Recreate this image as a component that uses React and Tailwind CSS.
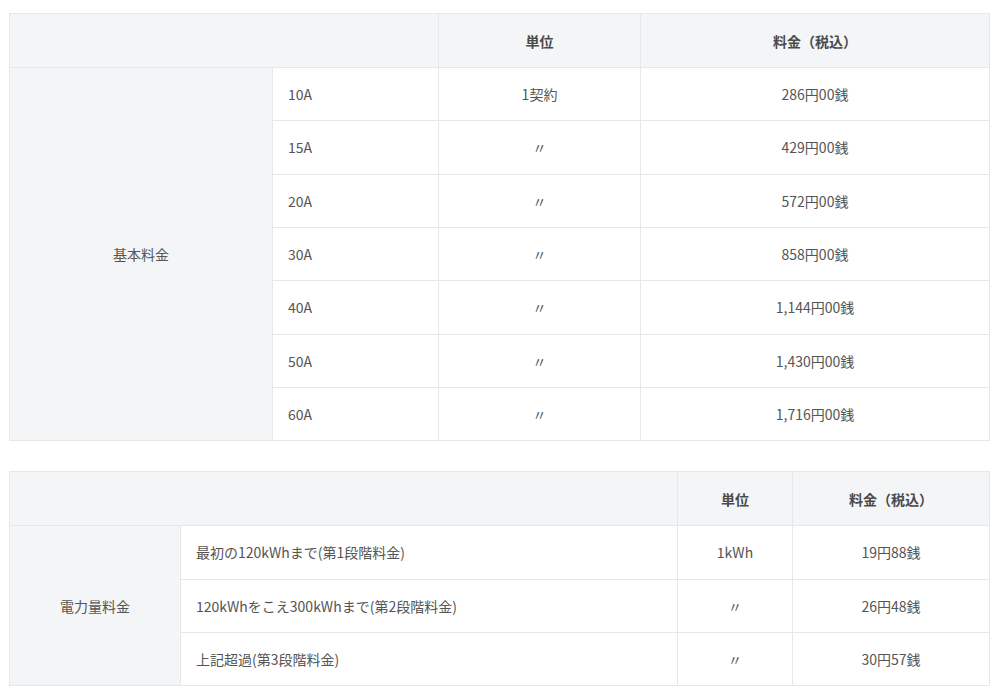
const basic = [
  ['10A', '1契約', '286円00銭'],
  ['15A', '〃', '429円00銭'],
  ['20A', '〃', '572円00銭'],
  ['30A', '〃', '858円00銭'],
  ['40A', '〃', '1,144円00銭'],
  ['50A', '〃', '1,430円00銭'],
  ['60A', '〃', '1,716円00銭'],
];

const usage = [
  ['最初の120kWhまで(第1段階料金)', '1kWh', '19円88銭'],
  ['120kWhをこえ300kWhまで(第2段階料金)', '〃', '26円48銭'],
  ['上記超過(第3段階料金)', '〃', '30円57銭'],
];

const cell = 'border border-[#e6e7e9] text-[14px] leading-[24px]';

function PriceTable({ cols, label, rows }) {
  return (
    <table className="w-[980px] table-fixed border-collapse text-[#555]">
      <colgroup>
        {cols.map(function (w, i) {
          return <col key={i} style={{ width: w }} />;
        })}
      </colgroup>
      <thead>
        <tr className="h-[54px] bg-[#f4f5f7]">
          <th colSpan={2} className={cell}></th>
          <th className={cell + ' font-bold text-[#4a4a4a]'}>単位</th>
          <th className={cell + ' font-bold text-[#4a4a4a]'}>料金（税込）</th>
        </tr>
      </thead>
      <tbody>
        {rows.map(function (r, i) {
          return (
            <tr key={i} className="h-[53.33px]">
              {i === 0 && (
                <td rowSpan={rows.length} className={cell + ' bg-[#f4f5f7] text-center'}>{label}</td>
              )}
              <td className={cell + ' px-[15px] text-left'}>{r[0]}</td>
              <td className={cell + ' text-center'}>{r[1]}</td>
              <td className={cell + ' text-center'}>{r[2]}</td>
            </tr>
          );
        })}
      </tbody>
    </table>
  );
}

export default function App() {
  return (
    <div className="min-h-screen bg-white pl-[9px] pt-[13px] font-['Noto_Sans_CJK_JP','Noto_Sans',sans-serif]">
      <div className="flex flex-col gap-[30px]">
        <PriceTable cols={[263, 166, 202, 349]} label="基本料金" rows={basic} />
        <PriceTable cols={[171, 497, 115, 197]} label="電力量料金" rows={usage} />
      </div>
    </div>
  );
}
